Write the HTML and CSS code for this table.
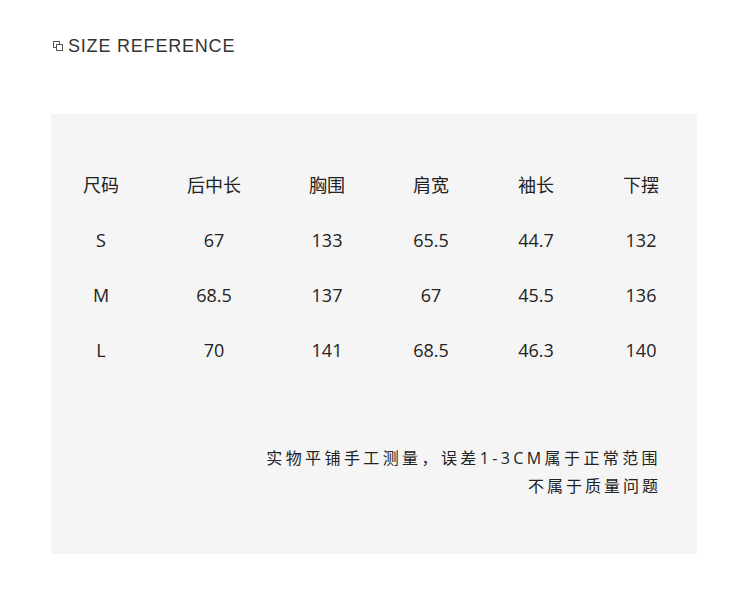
FILE: index.html
```html
<!DOCTYPE html>
<html lang="zh">
<head>
<meta charset="utf-8">
<link rel="stylesheet" href="styles.css">
</head>
<body>
<header class="head">
  <svg class="head-icon" width="11" height="11" viewBox="0 0 11 11" aria-hidden="true">
    <rect x="0.5" y="0.5" width="6" height="6" fill="none" stroke="#555" stroke-width="1"/>
    <rect x="3.5" y="3.5" width="6" height="6" fill="#fff" stroke="#555" stroke-width="1"/>
  </svg>
  <span class="head-title">SIZE REFERENCE</span>
</header>
<section class="panel">
  <div class="grid">
    <div class="cell">尺码</div><div class="cell">后中长</div><div class="cell">胸围</div><div class="cell">肩宽</div><div class="cell">袖长</div><div class="cell">下摆</div>
    <div class="cell">S</div><div class="cell">67</div><div class="cell">133</div><div class="cell">65.5</div><div class="cell">44.7</div><div class="cell">132</div>
    <div class="cell">M</div><div class="cell">68.5</div><div class="cell">137</div><div class="cell">67</div><div class="cell">45.5</div><div class="cell">136</div>
    <div class="cell">L</div><div class="cell">70</div><div class="cell">141</div><div class="cell">68.5</div><div class="cell">46.3</div><div class="cell">140</div>
  </div>
  <div class="note">
    <p class="note-line note-wide">实物平铺手工测量，误差1-3CM属于正常范围</p>
    <p class="note-line">不属于质量问题</p>
  </div>
</section>
</body>
</html>
```
FILE: styles.css
```css
html, body {
  margin: 0;
  padding: 0;
  background: #fff;
}
body {
  width: 750px;
  height: 605px;
  overflow: hidden;
}
.head {
  display: flex;
  align-items: center;
  gap: 4px;
  padding: 36px 0 0 53px;
  height: 20px;
}
.head-icon {
  display: block;
  margin-top: 1px;
}
.head-title {
  font-family: "Liberation Sans", Arial, sans-serif;
  font-size: 18px;
  line-height: 20px;
  letter-spacing: 0.8px;
  color: #333;
}
.panel {
  margin: 58px 0 0 51px;
  width: 646px;
  height: 440px;
  background: #f5f5f5;
  box-sizing: border-box;
  padding-top: 43px;
}
.grid {
  display: grid;
  grid-template-columns: 100px 126px 100px 108px 102px 108px;
  grid-auto-rows: 55px;
  align-items: center;
  justify-items: center;
}
.cell {
  font-family: "Open Sans", "Noto Sans CJK SC", sans-serif;
  font-size: 18px;
  line-height: 24px;
  color: #222;
}
.note {
  margin-top: 67px;
  padding-right: 36px;
  text-align: right;
}
.note-line {
  margin: 0;
  font-family: "Open Sans", "Noto Sans CJK SC", sans-serif;
  font-size: 16px;
  line-height: 28px;
  letter-spacing: 3px;
  color: #222;
}
.note-wide {
  letter-spacing: 3.4px;
}
```
